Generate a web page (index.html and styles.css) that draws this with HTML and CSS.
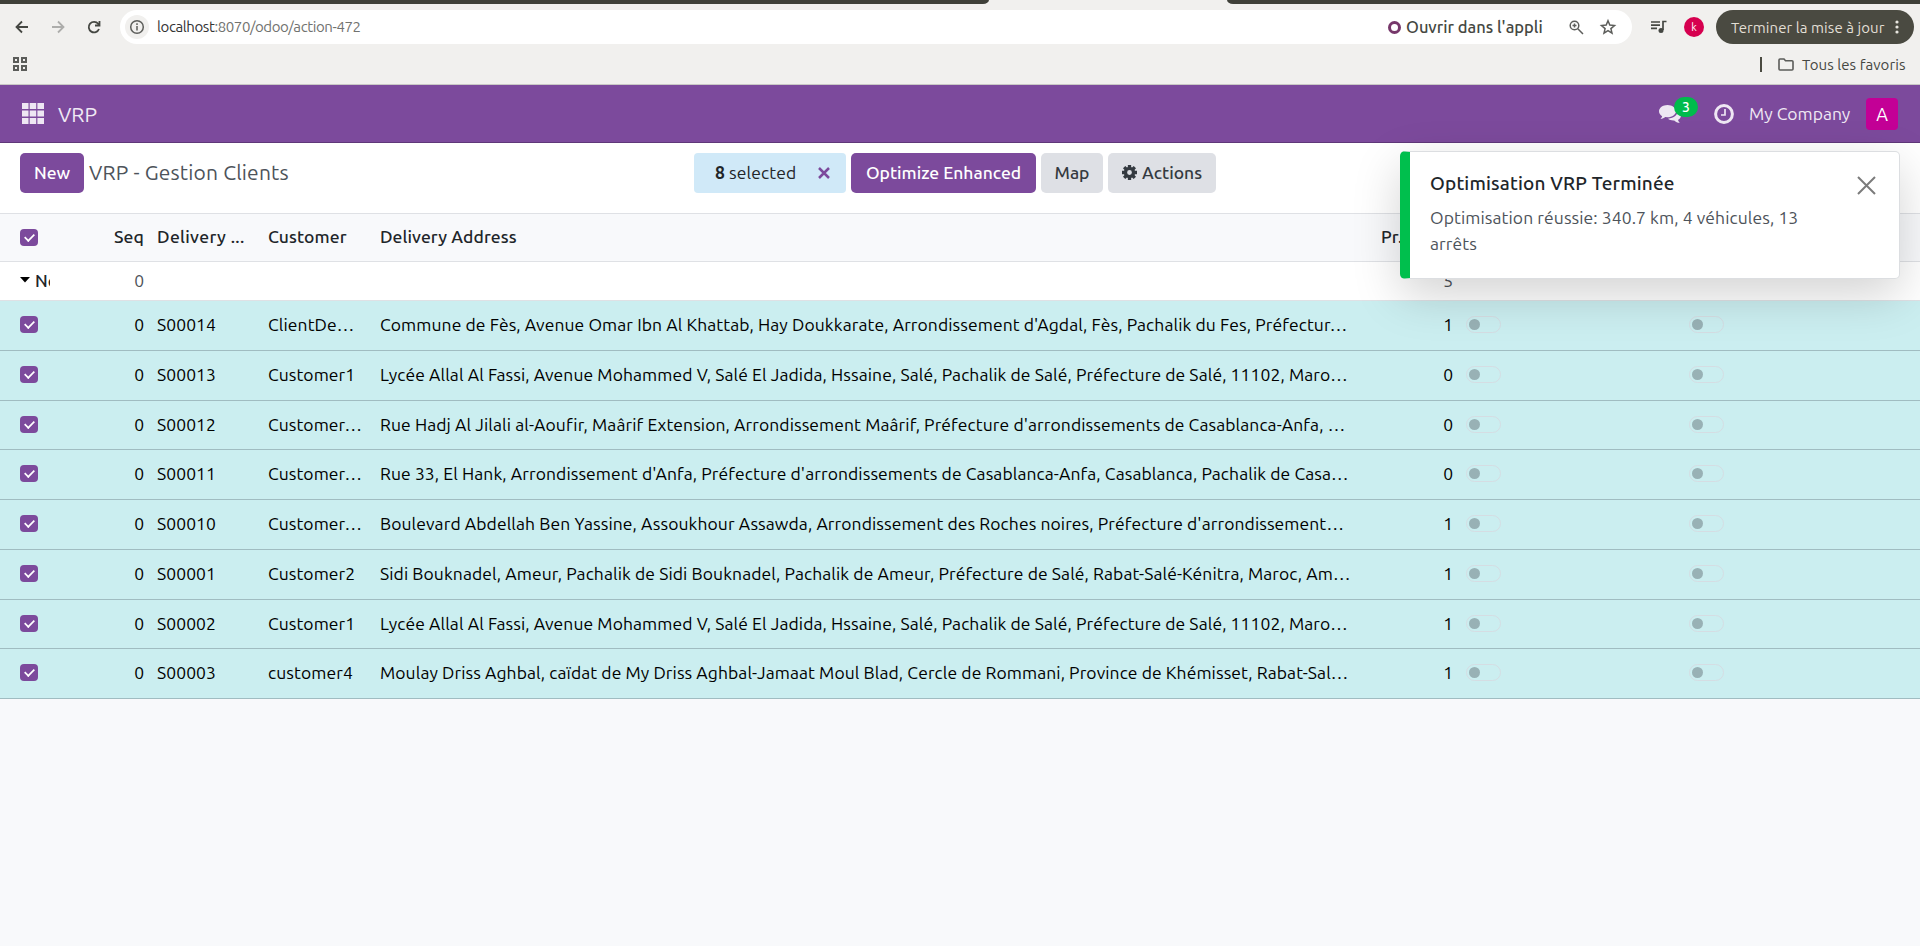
FILE: index.html
```html
<!DOCTYPE html>
<html lang="fr">
<head>
<meta charset="utf-8">
<title>VRP - Gestion Clients</title>
<link rel="stylesheet" href="styles.css">
</head>
<body>
<div class="browser">
  <div class="tabs"><i class="tab-left"></i><i class="tab-gap"></i><i class="tab-right"></i></div>
  <div class="toolbar">
    <svg class="nav-back" width="14" height="14" viewBox="0 0 14 14"><path d="M13 7H2M7 1.500 1.500 7 7 12.500"/></svg>
    <svg class="nav-forward" width="14" height="14" viewBox="0 0 14 14"><path d="M1 7h11M7 1.500 12.500 7 7 12.500"/></svg>
    <svg class="nav-reload" width="14" height="14" viewBox="0 0 14 14"><path d="M12 9a5.300 5.300 0 1 1-.8-5.200L12.200 5M12.500 1v4.500H8"/></svg>
    <div class="omnibox">
      <span class="info"><svg width="16" height="16" viewBox="0 0 16 16"><circle cx="8" cy="8" r="6.300"/><path d="M8 7v4.500M8 4.300v1.700"/></svg></span>
      <span class="url"><b>localhost</b>:8070/odoo/action-472</span>
      <i class="app-ring"></i><span class="open-app">Ouvrir dans l'appli</span>
      <svg class="magnify" width="15" height="15" viewBox="0 0 15 15"><circle cx="5.500" cy="5.500" r="4.300"/><path d="M8.800 8.800 14 14M5.500 3.500v4M3.500 5.500h4"/></svg>
      <svg class="star" width="16" height="16" viewBox="0 0 16 16"><path d="m8 1.800 1.800 4.300 4.700.4-3.600 3.100 1.100 4.600L8 11.700l-4 2.500 1.100-4.600-3.600-3.100 4.700-.4z"/></svg>
    </div>
    <svg class="media" width="16" height="14" viewBox="0 0 16 14"><path d="M0 2h9M0 5.200h9M0 8.400h6M12 10V1.500h3.500"/><circle cx="10" cy="10.500" r="2.500"/></svg>
    <span class="profile">k</span>
    <div class="update"><span>Terminer la mise à jour</span><svg width="4" height="14" viewBox="0 0 4 14"><circle cx="2" cy="2" r="1.600"/><circle cx="2" cy="7" r="1.600"/><circle cx="2" cy="12" r="1.600"/></svg></div>
  </div>
  <div class="bookmarks">
    <svg width="14" height="14" viewBox="0 0 14 14"><path d="M1 1h4v4H1zM9 1h4v4H9zM1 9h4v4H1zM9 9h4v4H9z"/></svg>
    <i class="divider"></i>
    <svg class="folder" width="16" height="13" viewBox="0 0 16 13"><path d="M1 2a1 1 0 0 1 1-1h4l1.500 1.700H14a1 1 0 0 1 1 1V11a1 1 0 0 1-1 1H2a1 1 0 0 1-1-1z"/></svg>
    <span class="favorites">Tous les favoris</span>
  </div>
</div>

<header class="navbar">
  <svg class="apps" width="22" height="21" viewBox="0 0 22 21"><path d="M0 0h6.500v6H0zM7.700 0h6.500v6H7.700zM15.400 0H22v6h-6.600zM0 7.500h6.500v6H0zM7.700 7.500h6.500v6H7.700zM15.400 7.500H22v6h-6.600zM0 15h6.500v6H0zM7.700 15h6.500v6H7.700zM15.400 15H22v6h-6.600z"/></svg>
  <span class="brand">VRP</span>
  <div class="chat">
    <svg width="22" height="20" viewBox="0 0 22 20"><path d="M8.500 1C3.800 1 0 3.900 0 7.300c0 2 1.200 3.700 3.200 4.900-.3 1.100-1 1.900-1.700 2.700 2 0 3.500-.8 4.700-1.800l2.300.2c4.700 0 8.500-2.700 8.500-6S13.200 1 8.500 1z"/><path d="M18.800 6.300c.2 4.500-3.800 8-9.800 8.400 1.500 1.200 3.700 1.900 6.200 1.700 1.600 1.300 3.300 2.300 5.600 2.400-.9-.9-1.500-1.700-1.800-2.900 2-1.100 3-2.600 3-4.400 0-2-1.100-3.900-3.200-5.200z"/></svg>
    <b class="badge">3</b>
  </div>
  <svg class="clock" width="20" height="20" viewBox="0 0 20 20"><circle cx="10" cy="10" r="8.400"/><path d="M11 5v6H7"/></svg>
  <span class="company">My Company</span>
  <span class="avatar">A</span>
</header>

<section class="control">
  <button class="btn primary new">New</button>
  <span class="title">VRP - Gestion Clients</span>
  <div class="selection"><span><b>8</b> <em>selected</em></span><svg width="12" height="12" viewBox="0 0 12 12"><path d="m1 1 10 10M11 1 1 11"/></svg></div>
  <button class="btn primary optimize">Optimize Enhanced</button>
  <button class="btn map">Map</button>
  <button class="btn actions"><svg width="15" height="15" viewBox="0 0 16 16"><circle cx="8" cy="8" r="4.300"/><path d="M8 0v3M8 13v3M0 8h3M13 8h3M2.300 2.300l2.200 2.200M11.500 11.500l2.200 2.200M2.300 13.700l2.200-2.200M11.500 4.500l2.200-2.200"/></svg><span>Actions</span></button>
</section>

<main class="list" id="list">
  <div class="row head"><i class="check"></i><span class="seq">Seq</span><span class="so">Delivery ...</span><span class="customer">Customer</span><span class="address">Delivery Address</span><span class="priority">Pr...</span></div>
  <div class="row group"><span class="group-name"><svg width="10" height="6" viewBox="0 0 10 6"><path d="M0 0h10L5 5.500z"/></svg><b>None</b></span><span class="seq">0</span><span></span><span></span><span></span><span class="num">5</span></div>
</main>

<aside class="toast">
  <div class="toast-body">
    <h2>Optimisation VRP Terminée</h2>
    <p>Optimisation réussie: 340.7 km, 4 véhicules, 13<br>arrêts</p>
  </div>
  <svg width="19" height="19" viewBox="0 0 19 19"><path d="m1 1 17 17M18 1 1 18"/></svg>
</aside>
<script src="script.js"></script>
</body>
</html>
```
FILE: styles.css
```css
* { box-sizing: border-box; }
body { margin: 0; height: 946px; overflow: hidden; background: #f8f9fb; color: #212529; font-family: Ubuntu, "Noto Sans", sans-serif; font-size: 17.500px; }
svg { display: block; flex: none; overflow: visible; }
.toolbar span, .bookmarks span, .navbar span, .control span, .row span { white-space: nowrap; }

.browser { height: 85px; background: #f1f0ee; border-bottom: 1px solid #c9c8c5; color: #454742; }
.tabs { display: flex; height: 4px; background: #f1f0ee; }
.tabs i { background: #3f4039; }
.tab-left { width: 989px; border-bottom-right-radius: 6px 4px; }
.tabs .tab-gap { width: 238px; background: #f1f0ee; }
.tab-right { flex: 1; border-bottom-left-radius: 6px 4px; }
.toolbar { display: flex; align-items: center; height: 46px; padding: 0 6px 0 15px; }
.toolbar > svg { fill: none; stroke: #454742; stroke-width: 1.8; }
.toolbar .nav-forward { margin-left: 22px; stroke: #adadab; }
.nav-reload { margin-left: 22px; }
.omnibox { display: flex; align-items: center; flex: none; width: 1512px; height: 34px; margin-left: 19px; padding: 0 16px 0 5px; border-radius: 17px; background: #fff; }
.omnibox svg { fill: none; stroke: #5d5e5b; stroke-width: 1.5; }
.info { display: grid; place-items: center; width: 24px; height: 24px; border-radius: 50%; background: #f1f0ee; }
.url { margin: -1px 0 0 8px; color: #71726f; font-size: 15px; letter-spacing: -.4px; }
.url b { color: #333; font-weight: 400; }
.app-ring { width: 13px; height: 13px; margin-left: auto; border: 3px solid #76376a; border-radius: 50%; }
.open-app { width: 137px; margin: 0 26px 0 5px; font-size: 16.500px; font-weight: 550; }
.star { margin-left: 16px; }
.toolbar .media { margin-left: 19px; fill: #454742; stroke-width: 1.7; }
.media path { fill: none; }
.toolbar .media circle { stroke: none; }
.profile { display: grid; place-items: center; width: 20px; height: 20px; margin-left: 17px; border-radius: 50%; background: #d6004f; color: #fff; font-size: 11px; }
.update { display: flex; align-items: center; justify-content: space-between; width: 198px; height: 34px; margin-left: auto; padding: 0 15px 0 15px; border-radius: 17px; background: #4a4a41; color: #e2dfd5; font-size: 15px; letter-spacing: .07px; }
.update svg { fill: #e8e6df; }
.bookmarks { display: flex; align-items: center; height: 28px; padding: 0 14px 0 13px; font-size: 15px; letter-spacing: .07px; }
.bookmarks svg { fill: none; stroke: #5b5c59; stroke-width: 2; }
.divider { width: 2px; height: 15px; margin-left: auto; background: #4a4a41; }
.bookmarks .folder { margin: 0 8px 0 16px; stroke-width: 1.6; }
.favorites { width: 104px; }

.navbar { display: flex; align-items: center; height: 58px; padding: 0 22px; background: #7c4a9c; border-bottom: 1px solid #5f3779; color: #f0e9f4; }
.navbar svg { fill: #eee7f3; }
.brand { margin-left: 14px; font-size: 21px; }
.chat { position: relative; margin-left: auto; }
.badge { position: absolute; left: 15px; top: -7px; width: 24px; height: 20px; border-radius: 10px; background: #00bb4c; color: #fff; font-size: 14px; font-weight: 500; line-height: 20px; text-align: center; }
.navbar .clock { margin-left: 33px; fill: none; stroke: #eee7f3; stroke-width: 3; }
.clock path { stroke-width: 1.700; }
.company { width: 102px; margin: 0 15px 0 15px; }
.avatar { display: grid; place-items: center; width: 32px; height: 32px; border-radius: 4px; background: #c30096; color: #fff; font-size: 18px; }

.control { display: flex; align-items: flex-start; height: 70px; padding: 10px 20px; background: #fff; }
.btn { display: flex; align-items: center; justify-content: center; flex: none; height: 40px; margin: 0 0 0 5px; padding: 0 0 2px; border: 0; border-radius: 5px; background: #dee0e5; color: #343a40; font: 550 17.500px Ubuntu, "Noto Sans", sans-serif; white-space: nowrap; }
.primary { background: #7c4a9c; color: #fff; }
.btn.new { width: 64px; margin: 0; }
.title { width: 200px; margin: 4px 0 0 5px; color: #4d535a; font-size: 21px; line-height: 30px; letter-spacing: .17px; }
.selection { display: flex; align-items: center; flex: none; width: 152px; height: 40px; margin-left: 405px; padding: 0 16px 1px 21px; justify-content: space-between; border-radius: 4px; background: #d0e9f8; }
.selection em { font-style: normal; letter-spacing: .15px; }
.selection svg { fill: none; stroke: #7c4a9c; stroke-width: 2.500; }
.optimize { width: 185px; }
.map { width: 62px; }
.actions { width: 108px; gap: 5px; }
.actions svg { fill: none; stroke: #343a40; stroke-width: 3.500; }

.row { display: grid; grid-template-columns: 50px 94px 111px 112px 969px 117px 223px 1fr; align-items: center; height: 49.750px; padding-bottom: 1.500px; border-bottom: 1px solid #a0bcc1; background: #cbeef0; color: #000; }
.row.head { height: 49px; border-top: 1px solid #dfe1e5; border-bottom-color: #dfe1e5; background: #f8f9fb; color: #212529; font-weight: 550; letter-spacing: .1px; }
.row.head .so { letter-spacing: .35px; }
.row.group { height: 39px; border-bottom-color: #dfe1e5; background: #fff; color: #4d535a; }
.check { display: grid; place-items: center; width: 18px; height: 17px; margin-left: 20px; border-radius: 4px; background: #7c4a9c; }
.head .check { margin-top: 1px; }
.check::after { content: ""; width: 9px; height: 5px; margin-top: -2px; border: solid #fff; border-width: 0 0 2.500px 2.500px; transform: rotate(-45deg) scale(.85); }
.group-name { display: flex; align-items: center; gap: 5px; width: 30px; margin-left: 20px; overflow: hidden; color: #212529; }
.group-name b { font-weight: 550; }
.seq, .num { text-align: right; }
.so, .customer, .address { padding-left: 13px; letter-spacing: .085px; }
.priority { padding-left: 45px; }
.toggle { display: block; width: 35px; height: 17px; margin-left: 13px; padding: 2px; border: 1px solid #d5dde3; border-radius: 9px; }
.toggle::before { content: ""; display: block; width: 11px; height: 11px; border-radius: 50%; background: #98b1b5; }

.toast { position: absolute; left: 1400px; top: 151px; display: flex; justify-content: space-between; width: 500px; height: 128px; padding: 16px 23px 0 20px; border: 1px solid #dcdee1; border-left: 10px solid #00bf4d; border-radius: 5px; background: #fff; box-shadow: 0 16px 48px rgba(0, 0, 0, .175); }
.toast h2 { margin: 0; font-size: 19px; font-weight: 550; line-height: 30px; letter-spacing: .17px; white-space: nowrap; }
.toast p { margin: 7px 0 0; color: #4d535a; line-height: 26px; letter-spacing: .085px; white-space: nowrap; }
.toast svg { margin-top: 8px; fill: none; stroke: #7b7b7b; stroke-width: 2; }
```
FILE: script.js
```js
const rows = [
  ["S00014", "ClientDe…", "Commune de Fès, Avenue Omar Ibn Al Khattab, Hay Doukkarate, Arrondissement d'Agdal, Fès, Pachalik du Fes, Préfectur…", 1],
  ["S00013", "Customer1", "Lycée Allal Al Fassi, Avenue Mohammed V, Salé El Jadida, Hssaine, Salé, Pachalik de Salé, Préfecture de Salé, 11102, Maro…", 0],
  ["S00012", "Customer…", "Rue Hadj Al Jilali al-Aoufir, Maârif Extension, Arrondissement Maârif, Préfecture d'arrondissements de Casablanca-Anfa, …", 0],
  ["S00011", "Customer…", "Rue 33, El Hank, Arrondissement d'Anfa, Préfecture d'arrondissements de Casablanca-Anfa, Casablanca, Pachalik de Casa…", 0],
  ["S00010", "Customer…", "Boulevard Abdellah Ben Yassine, Assoukhour Assawda, Arrondissement des Roches noires, Préfecture d'arrondissement…", 1],
  ["S00001", "Customer2", "Sidi Bouknadel, Ameur, Pachalik de Sidi Bouknadel, Pachalik de Ameur, Préfecture de Salé, Rabat-Salé-Kénitra, Maroc, Am…", 1],
  ["S00002", "Customer1", "Lycée Allal Al Fassi, Avenue Mohammed V, Salé El Jadida, Hssaine, Salé, Pachalik de Salé, Préfecture de Salé, 11102, Maro…", 1],
  ["S00003", "customer4", "Moulay Driss Aghbal, caïdat de My Driss Aghbal-Jamaat Moul Blad, Cercle de Rommani, Province de Khémisset, Rabat-Sal…", 1]
];
const list = document.getElementById("list");

for (const [order, customer, address, priority] of rows) {
  const row = document.createElement("div");
  row.className = "row";
  row.innerHTML = `<i class="check"></i><span class="seq">0</span><span class="so">${order}</span><span class="customer">${customer}</span><span class="address">${address}</span><span class="num">${priority}</span><i class="toggle"></i><i class="toggle"></i>`;
  list.append(row);
}
```
